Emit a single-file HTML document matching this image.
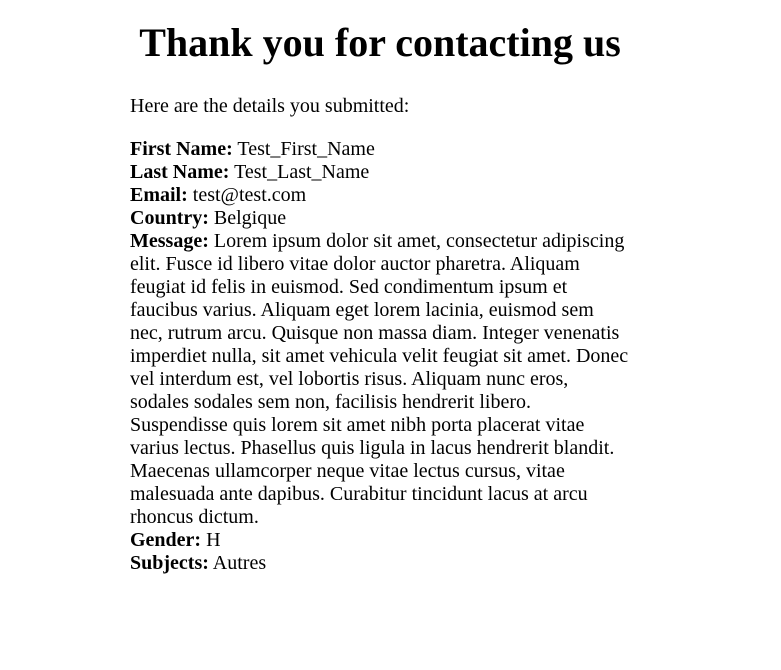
<!DOCTYPE html>
<html><head><style>
body{margin:0;background:#fff;font-family:"Liberation Serif","Times New Roman",serif;color:#000;}
.c{position:absolute;left:130px;top:20px;width:500px;}
h1{font-size:40px;line-height:46px;margin:0;text-align:center;font-weight:bold;}
p{font-size:20px;line-height:23px;margin:0;}
.p1{margin-top:29px;}
.p2{margin-top:20px;}
</style></head><body>
<div class="c">
<h1>Thank you for contacting us</h1>
<p class="p1">Here are the details you submitted:</p>
<p class="p2"><b>First Name:</b> Test_First_Name<br>
<b>Last Name:</b> Test_Last_Name<br>
<b>Email:</b> test@test.com<br>
<b>Country:</b> Belgique<br>
<b>Message:</b> Lorem ipsum dolor sit amet, consectetur adipiscing elit. Fusce id libero vitae dolor auctor pharetra. Aliquam feugiat id felis in euismod. Sed condimentum ipsum et faucibus varius. Aliquam eget lorem lacinia, euismod sem nec, rutrum arcu. Quisque non massa diam. Integer venenatis imperdiet nulla, sit amet vehicula velit feugiat sit amet. Donec vel interdum est, vel lobortis risus. Aliquam nunc eros, sodales sodales sem non, facilisis hendrerit libero. Suspendisse quis lorem sit amet nibh porta placerat vitae varius lectus. Phasellus quis ligula in lacus hendrerit blandit. Maecenas ullamcorper neque vitae lectus cursus, vitae malesuada ante dapibus. Curabitur tincidunt lacus at arcu rhoncus dictum.<br>
<b>Gender:</b> H<br>
<b>Subjects:</b> Autres</p>
</div>
</body></html>
